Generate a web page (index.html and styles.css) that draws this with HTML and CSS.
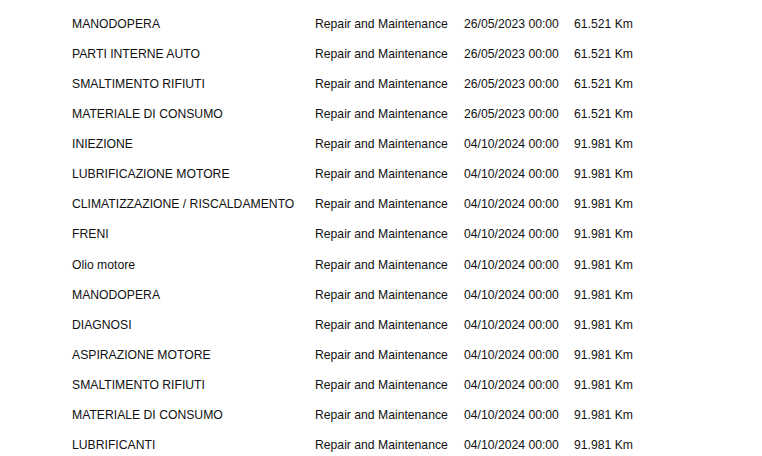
FILE: index.html
```html
<!DOCTYPE html>
<html>
<head>
<meta charset="utf-8">
<link rel="stylesheet" href="styles.css">
</head>
<body>
<div class="table">
  <div class="row"><span>MANODOPERA</span><span>Repair and Maintenance</span><span>26/05/2023 00:00</span><span>61.521 Km</span></div>
  <div class="row"><span>PARTI INTERNE AUTO</span><span>Repair and Maintenance</span><span>26/05/2023 00:00</span><span>61.521 Km</span></div>
  <div class="row"><span>SMALTIMENTO RIFIUTI</span><span>Repair and Maintenance</span><span>26/05/2023 00:00</span><span>61.521 Km</span></div>
  <div class="row"><span>MATERIALE DI CONSUMO</span><span>Repair and Maintenance</span><span>26/05/2023 00:00</span><span>61.521 Km</span></div>
  <div class="row"><span>INIEZIONE</span><span>Repair and Maintenance</span><span>04/10/2024 00:00</span><span>91.981 Km</span></div>
  <div class="row"><span>LUBRIFICAZIONE MOTORE</span><span>Repair and Maintenance</span><span>04/10/2024 00:00</span><span>91.981 Km</span></div>
  <div class="row"><span>CLIMATIZZAZIONE / RISCALDAMENTO</span><span>Repair and Maintenance</span><span>04/10/2024 00:00</span><span>91.981 Km</span></div>
  <div class="row"><span>FRENI</span><span>Repair and Maintenance</span><span>04/10/2024 00:00</span><span>91.981 Km</span></div>
  <div class="row"><span>Olio motore</span><span>Repair and Maintenance</span><span>04/10/2024 00:00</span><span>91.981 Km</span></div>
  <div class="row"><span>MANODOPERA</span><span>Repair and Maintenance</span><span>04/10/2024 00:00</span><span>91.981 Km</span></div>
  <div class="row"><span>DIAGNOSI</span><span>Repair and Maintenance</span><span>04/10/2024 00:00</span><span>91.981 Km</span></div>
  <div class="row"><span>ASPIRAZIONE MOTORE</span><span>Repair and Maintenance</span><span>04/10/2024 00:00</span><span>91.981 Km</span></div>
  <div class="row"><span>SMALTIMENTO RIFIUTI</span><span>Repair and Maintenance</span><span>04/10/2024 00:00</span><span>91.981 Km</span></div>
  <div class="row"><span>MATERIALE DI CONSUMO</span><span>Repair and Maintenance</span><span>04/10/2024 00:00</span><span>91.981 Km</span></div>
  <div class="row"><span>LUBRIFICANTI</span><span>Repair and Maintenance</span><span>04/10/2024 00:00</span><span>91.981 Km</span></div>
</div>
</body>
</html>
```

FILE: styles.css
```css
html, body {
  margin: 0;
  padding: 0;
  background: #ffffff;
}
body {
  font-family: "Liberation Sans", Arial, sans-serif;
  font-size: 12.2px;
  color: #111111;
}
.table {
  padding: 9px 0 0 72px;
}
.row {
  display: grid;
  grid-template-columns: 243px 149px 110px auto;
  height: 30.07px;
  line-height: 30px;
  white-space: nowrap;
}
```
